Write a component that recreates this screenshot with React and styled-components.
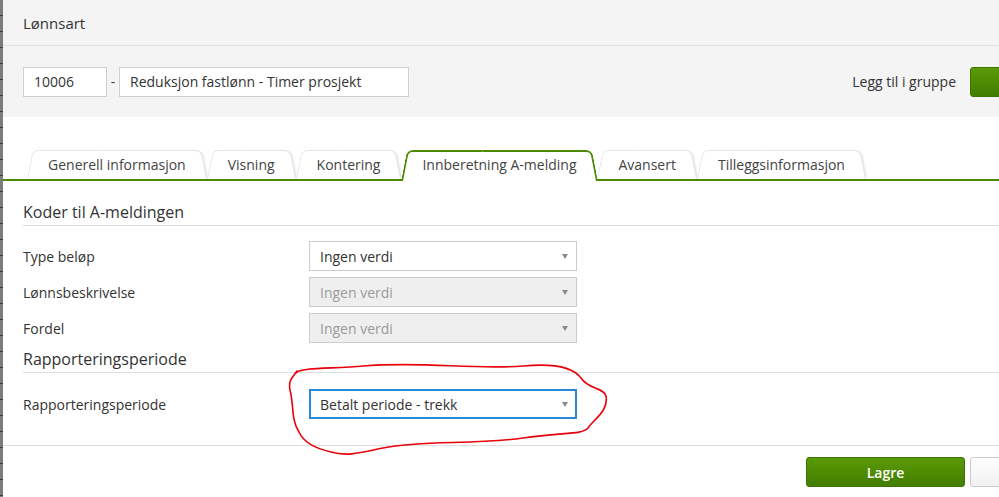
import React from 'react'
import styled, { createGlobalStyle } from 'styled-components'

const GlobalStyle = createGlobalStyle`
  html, body {
    margin: 0;
    padding: 0;
    overflow: hidden;
    background: #ffffff;
    font-family: 'Open Sans', 'Liberation Sans', sans-serif;
    color: #333333;
  }
`

const GREEN = '#4c8a00'

const Screen = styled.div`
  display: flex;
  height: 497px;
  width: 999px;
  overflow: hidden;
`

const BackdropStrip = styled.div`
  flex: 0 0 3px;
  background: repeating-linear-gradient(to bottom, #7c7c7c 0 15px, #3e3e3e 15px 16px);
`

const Modal = styled.div`
  position: relative;
  flex: 0 0 1146px;
  width: 1146px;
  background: #ffffff;
  display: flex;
  flex-direction: column;
`

const Header = styled.div`
  height: 45px;
  display: flex;
  align-items: center;
  padding: 0 20px;
  background: #f4f4f4;
  border-bottom: 1px solid #e2e2e2;
  font-size: 15px;
  color: #333;
`

const Toolbar = styled.div`
  height: 71px;
  display: flex;
  align-items: center;
  justify-content: space-between;
  padding: 0 20px;
  background: #f4f4f4;
`

const FieldGroup = styled.div`
  display: flex;
  align-items: center;
`

const TextBox = styled.div`
  box-sizing: border-box;
  width: ${p => p.$width}px;
  height: 30px;
  display: flex;
  align-items: center;
  padding: 0 10px;
  background: #fff;
  border: 1px solid #cfcfcf;
  font-size: 14px;
  color: #333;
`

const Dash = styled.span`
  width: 12px;
  text-align: center;
  font-size: 14px;
  color: #444;
`

const RightGroup = styled.div`
  display: flex;
  align-items: center;
  gap: 14px;
  font-size: 14px;
  color: #333;
`

const Button = styled.button`
  box-sizing: border-box;
  width: 159px;
  height: 30px;
  border-radius: 3px;
  font-family: inherit;
  font-size: 14px;
  font-weight: 600;
  cursor: pointer;
  border: 1px solid ${p => (p.$primary ? '#3e7300' : '#cccccc')};
  color: ${p => (p.$primary ? '#ffffff' : '#333333')};
  background: ${p =>
    p.$primary
      ? 'linear-gradient(#5a9a06, #427d00)'
      : 'linear-gradient(#ffffff, #f1f1f1)'};
`

const TabBar = styled.div`
  display: flex;
  align-items: flex-end;
  margin-top: 33px;
  padding-left: 24px;
  border-bottom: 2px solid ${GREEN};
`

const Tab = styled.div`
  position: relative;
  isolation: isolate;
  box-sizing: border-box;
  height: ${p => (p.$active ? 31 : 29)}px;
  margin-bottom: ${p => (p.$active ? '-2px' : '0')};
  padding: ${p => (p.$active ? '0 21px 2px' : '0 21px')};
  display: flex;
  align-items: center;
  font-size: 14px;
  color: #444;
  white-space: nowrap;
  cursor: pointer;

  &::before,
  &::after {
    content: '';
    position: absolute;
    top: 0;
    bottom: 0;
    width: 55%;
    z-index: -1;
    background: #fff;
    border: ${p => (p.$active ? `2px solid ${GREEN}` : '1px solid #dde7eb')};
    border-bottom: none;
  }

  &::before {
    left: 0;
    border-right: none;
    border-top-left-radius: 6px;
    transform-origin: bottom left;
    transform: skewX(-11deg);
  }

  &::after {
    right: 0;
    border-left: none;
    border-top-right-radius: 6px;
    transform-origin: bottom right;
    transform: skewX(11deg);
    box-shadow: ${p => (p.$active ? 'none' : '2px 0 2px -1px rgba(0, 0, 0, 0.12)')};
  }
`

const Content = styled.div`
  padding: 0 0 26px 20px;
`

const SectionTitle = styled.h3`
  margin: ${p => p.$top}px 0 0;
  padding-bottom: 1px;
  line-height: 24px;
  font-size: 16px;
  font-weight: 400;
  color: #333;
  border-bottom: 1px solid #dedede;
`

const Rows = styled.div`
  display: flex;
  flex-direction: column;
  gap: 6px;
  margin-top: ${p => p.$top}px;
`

const Row = styled.div`
  display: flex;
  align-items: center;
  height: 30px;
`

const Label = styled.div`
  width: 286px;
  font-size: 14px;
  color: #333;
`

const Select = styled.div`
  position: relative;
  box-sizing: border-box;
  width: 268px;
  height: 30px;
  display: flex;
  align-items: center;
  padding: 0 10px;
  font-size: 14px;
  background: ${p => (p.$disabled ? '#efefef' : '#ffffff')};
  color: ${p => (p.$disabled ? '#9a9a9a' : '#333333')};
  border: 1px solid ${p => (p.$focused ? '#2b8ad6' : '#cccccc')};
  box-shadow: ${p => (p.$focused ? 'inset 0 0 0 1px #2b8ad6' : 'none')};

  &::after {
    content: '';
    position: absolute;
    right: 8px;
    top: 12px;
    border-left: 3px solid transparent;
    border-right: 3px solid transparent;
    border-top: 5px solid #8a8a8a;
  }
`

const Footer = styled.div`
  display: flex;
  justify-content: flex-end;
  gap: 5px;
  padding: 11px 20px 0 0;
  border-top: 1px solid #dedede;
`

const Annotation = styled.svg`
  position: absolute;
  left: 277px;
  top: 355px;
  width: 340px;
  height: 110px;
  pointer-events: none;
  overflow: visible;
`

const tabs = [
  'Generell informasjon',
  'Visning',
  'Kontering',
  'Innberetning A-melding',
  'Avansert',
  'Tilleggsinformasjon',
]

const codeRows = [
  { label: 'Type beløp', value: 'Ingen verdi' },
  { label: 'Lønnsbeskrivelse', value: 'Ingen verdi', disabled: true },
  { label: 'Fordel', value: 'Ingen verdi', disabled: true },
]

const App = () => {
  return (
    <>
      <GlobalStyle />
      <Screen>
        <BackdropStrip />
        <Modal>
          <Header>Lønnsart</Header>
          <Toolbar>
            <FieldGroup>
              <TextBox $width={84}>10006</TextBox>
              <Dash>-</Dash>
              <TextBox $width={290}>Reduksjon fastlønn - Timer prosjekt</TextBox>
            </FieldGroup>
            <RightGroup>
              Legg til i gruppe
              <Button $primary aria-label="Legg til" />
            </RightGroup>
          </Toolbar>

          <TabBar>
            {tabs.map(t => (
              <Tab key={t} $active={t === 'Innberetning A-melding'}>
                {t}
              </Tab>
            ))}
          </TabBar>

          <Content>
            <SectionTitle $top={19}>Koder til A-meldingen</SectionTitle>
            <Rows $top={15}>
              {codeRows.map(r => (
                <Row key={r.label}>
                  <Label>{r.label}</Label>
                  <Select $disabled={r.disabled}>{r.value}</Select>
                </Row>
              ))}
            </Rows>

            <SectionTitle $top={4}>Rapporteringsperiode</SectionTitle>
            <Rows $top={16}>
              <Row>
                <Label>Rapporteringsperiode</Label>
                <Select $focused>Betalt periode - trekk</Select>
              </Row>
            </Rows>
          </Content>

          <Footer>
            <Button $primary>Lagre</Button>
            <Button aria-label="Avbryt" />
          </Footer>

          <Annotation viewBox="277 355 340 110">
            <path
              d="M 293 373 C 298 367, 330 369, 360 366 C 420 361, 470 370, 520 366 C 552 363, 570 367, 578 378 C 586 390, 600 387, 603 396 C 606 411, 590 420, 585 428 C 579 435, 560 432, 520 438 C 470 445, 420 440, 380 448 C 360 452, 345 457, 328 452 C 310 448, 300 441, 296 432 C 288 420, 291 405, 287 390 C 285 380, 290 377, 294 371"
              fill="none"
              stroke="#e8000b"
              strokeWidth="1.6"
              strokeLinecap="round"
            />
          </Annotation>
        </Modal>
      </Screen>
    </>
  )
}

export default App
